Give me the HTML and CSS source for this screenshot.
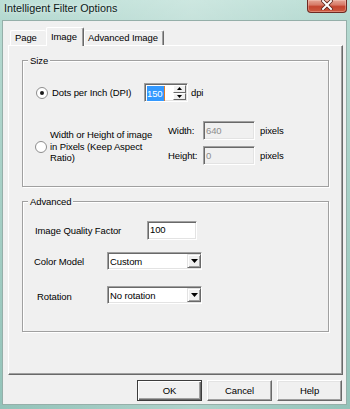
FILE: index.html
```html
<!DOCTYPE html>
<html>
<head>
<meta charset="utf-8">
<link rel="stylesheet" href="styles.css">
</head>
<body>
<div class="window">
  <div class="titlebar">
    <span class="title">Intelligent Filter Options</span>
    <div class="close">
      <svg width="12" height="10" viewBox="0 0 12 10">
        <path d="M2 1L10 9M10 1L2 9" stroke="#5a231b" stroke-width="3.6" stroke-linecap="square"/>
        <path d="M2 1L10 9M10 1L2 9" stroke="#fff" stroke-width="2" stroke-linecap="square"/>
      </svg>
    </div>
  </div>
  <div class="client">
    <div class="tabs">
      <div class="tab tab-page">Page</div>
      <div class="tab tab-active">Image</div>
      <div class="tab tab-adv">Advanced Image</div>
    </div>
    <div class="panel">
      <div class="group group-size">
        <div class="legend">Size</div>
        <div class="row-dpi">
          <svg class="radio" width="12" height="12" viewBox="0 0 12 12">
            <circle cx="6" cy="6" r="5.5" fill="#fff" stroke="#8c8c8c"/>
            <circle cx="6" cy="6" r="2" fill="#1a1a1a"/>
          </svg>
          <span class="dpi-label">Dots per Inch (DPI)</span>
          <div class="spin">
            <div class="spin-field"><span class="sel">150</span></div>
            <div class="spin-btns">
              <div class="spin-btn"><svg width="5" height="3" viewBox="0 0 5 3"><path d="M2.5 0L5 3H0z" fill="#000"/></svg></div>
              <div class="spin-btn"><svg width="5" height="3" viewBox="0 0 5 3"><path d="M0 0H5L2.5 3z" fill="#000"/></svg></div>
            </div>
          </div>
          <span class="unit-dpi">dpi</span>
        </div>
        <div class="row-px">
          <svg class="radio radio-px" width="12" height="12" viewBox="0 0 12 12">
            <circle cx="6" cy="6" r="5.5" fill="#fff" stroke="#8c8c8c"/>
          </svg>
          <div class="px-label">Width or Height of image<br>in Pixels (Keep Aspect<br>Ratio)</div>
          <div class="px-grid">
            <span class="px-name">Width:</span>
            <div class="field disabled">640</div>
            <span class="px-unit">pixels</span>
            <span class="px-name">Height:</span>
            <div class="field disabled">0</div>
            <span class="px-unit">pixels</span>
          </div>
        </div>
      </div>
      <div class="group group-adv">
        <div class="legend">Advanced</div>
        <div class="adv-row adv-row1">
          <span class="adv-label lbl-iqf">Image Quality Factor</span>
          <div class="field iqf">100</div>
        </div>
        <div class="adv-row adv-row2">
          <span class="adv-label lbl-color">Color Model</span>
          <div class="combo">
            <span class="combo-text">Custom</span>
            <div class="combo-btn"><svg width="7" height="4" viewBox="0 0 7 4"><path d="M0 0H7L3.5 4z" fill="#000"/></svg></div>
          </div>
        </div>
        <div class="adv-row adv-row3">
          <span class="adv-label lbl-rot">Rotation</span>
          <div class="combo">
            <span class="combo-text">No rotation</span>
            <div class="combo-btn"><svg width="7" height="4" viewBox="0 0 7 4"><path d="M0 0H7L3.5 4z" fill="#000"/></svg></div>
          </div>
        </div>
      </div>
    </div>
    <div class="buttons">
      <div class="btn btn-default">OK</div>
      <div class="btn">Cancel</div>
      <div class="btn">Help</div>
    </div>
  </div>
</div>
</body>
</html>
```

FILE: styles.css
```css
* { box-sizing: border-box; }

body {
  margin: 0;
  font-family: "Liberation Sans", Arial, sans-serif;
  font-size: 9.5px;
  letter-spacing: -0.1px;
  color: #000;
  background: #9cc8be;
}

.window {
  width: 350px;
  height: 409px;
  padding: 0 3px 4px 2px;
  display: flex;
  flex-direction: column;
  background:
    linear-gradient(90deg, rgba(255,255,255,0) 0, rgba(255,255,255,0.25) 55%, rgba(255,255,255,0) 100%),
    linear-gradient(180deg, #bcdfd6 0, #b4d9d0 20px, #a2cdc3 60%, #93c3b9 100%);
}

.titlebar {
  height: 20px;
  display: flex;
  justify-content: space-between;
  align-items: flex-start;
}

.title {
  font-size: 10.8px;
  letter-spacing: 0;
  line-height: 16px;
  padding-left: 2px;
  color: #0c1a18;
  text-shadow: 0 0 5px rgba(255,255,255,0.9);
}

.close {
  width: 40px;
  height: 13px;
  border: 1px solid #6e2a22;
  border-top: none;
  border-radius: 0 0 4px 4px;
  background: linear-gradient(180deg, #e5a595 0, #d77b68 40%, #c4452f 55%, #cc5a40 100%);
  box-shadow: inset 0 0 0 1px rgba(255,220,210,0.35);
  display: flex;
  justify-content: center;
  align-items: flex-start;
  padding-top: 0;
}

.client {
  flex: 1;
  background: #f0f0f0;
  border: 1px solid #95afa9;
  padding: 6px 3px 0 5px;
  display: flex;
  flex-direction: column;
}

/* Tabs */
.tabs {
  display: flex;
  align-items: flex-end;
  height: 18px;
  padding-left: 2px;
}

.tab {
  height: 15px;
  line-height: 14px;
  border: 1px solid;
  border-color: #fff #696969 transparent #fff;
  border-bottom: none;
  box-shadow: inset -1px 0 0 #a0a0a0;
  border-radius: 2px 2px 0 0;
  padding-left: 4px;
  background: #f0f0f0;
  white-space: nowrap;
}

.tab-page {
  width: 36px;
  border-right: none;
  box-shadow: none;
}

.tab-active {
  width: 38px;
  height: 19px;
  line-height: 17px;
  margin-bottom: -1px;
  position: relative;
  z-index: 2;
}

.tab-adv {
  width: 80px;
  padding-left: 3px;
}

/* Panel */
.panel {
  height: 330px;
  border: 1px solid;
  border-color: #fff #696969 #696969 #fff;
  box-shadow: inset -1px -1px 0 #a0a0a0;
  padding: 14px 0 0 13px;
}

.group {
  width: 307px;
  border: 1px solid #a0a0a0;
  box-shadow: inset 1px 1px 0 #fff, 1px 1px 0 #fff;
}

.group-size { height: 127px; }
.group-adv { height: 131px; margin-top: 14px; }

.legend {
  width: max-content;
  margin: -6px 0 0 5px;
  padding: 0 2px;
  background: #f0f0f0;
  line-height: 11px;
}

.radio { display: block; flex: none; }

.row-dpi {
  display: flex;
  align-items: center;
  height: 19px;
  margin-top: 17px;
  padding-left: 13px;
}

.dpi-label {
  width: 92px;
  margin-left: 4px;
  white-space: nowrap;
}

.spin {
  display: flex;
  width: 44px;
  height: 19px;
  border: 1px solid;
  border-color: #a0a0a0 #fff #fff #a0a0a0;
  box-shadow: inset 1px 1px 0 #696969, inset -1px -1px 0 #e3e3e3;
  background: #fff;
  padding: 1px 1px 1px 2px;
}

.spin-field {
  flex: 1;
  padding-top: 1px;
}

.sel {
  display: inline-block;
  background: #3399ff;
  color: #fff;
  line-height: 15px;
  padding: 0 1px 0 0;
  border-right: 1px solid #e07a2a;
}

.spin-btns {
  width: 13px;
  display: flex;
  flex-direction: column;
}

.spin-btn {
  flex: 1;
  border: 1px solid;
  border-color: #fff #696969 #696969 #fff;
  background: #f0f0f0;
  display: flex;
  align-items: center;
  justify-content: center;
}

.unit-dpi { margin-left: 3px; }

.row-px {
  display: flex;
  align-items: flex-start;
  margin-top: 19px;
  padding-left: 12px;
}

.radio-px { margin-top: 20px; }

.px-label {
  width: 115px;
  margin-left: 3px;
  margin-top: 8px;
  line-height: 11.5px;
  white-space: nowrap;
}

.px-grid {
  margin-left: 3px;
  display: grid;
  grid-template-columns: 35px 52px auto;
  grid-auto-rows: 19px;
  row-gap: 6px;
  align-items: center;
}

.px-unit { margin-left: 5px; }

.field {
  height: 19px;
  border: 1px solid;
  border-color: #a0a0a0 #fff #fff #a0a0a0;
  box-shadow: inset 1px 1px 0 #696969, inset -1px -1px 0 #e3e3e3;
  line-height: 15px;
  padding: 1px 0 0 2px;
  background: #fff;
}

.field.disabled {
  width: 52px;
  background: #f0f0f0;
  color: #8d8d8d;
}

.field.iqf {
  width: 50px;
  padding-left: 2px;
  line-height: 13px;
}

/* Advanced rows */
.adv-row {
  display: flex;
  align-items: center;
}

.adv-row1 { height: 19px; margin-top: 14px; }
.adv-row2 { height: 18px; margin-top: 12px; }
.adv-row3 { height: 18px; margin-top: 16px; }

.adv-label { white-space: nowrap; }
.lbl-iqf { width: 124px; padding-left: 12px; }
.lbl-color { width: 84px; padding-left: 11px; }
.lbl-rot { width: 84px; padding-left: 14px; margin-top: 3px; }

.combo {
  display: flex;
  align-items: center;
  width: 95px;
  height: 18px;
  border: 1px solid;
  border-color: #a0a0a0 #fff #fff #a0a0a0;
  box-shadow: inset 1px 1px 0 #696969, inset -1px -1px 0 #e3e3e3;
  background: #fff;
  padding: 1px 0 1px 2px;
}

.combo-text {
  flex: 1;
  white-space: nowrap;
}

.combo-btn {
  width: 14px;
  height: 14px;
  border: 1px solid;
  border-color: #e3e3e3 #696969 #696969 #e3e3e3;
  box-shadow: inset 1px 1px 0 #fff, inset -1px -1px 0 #a0a0a0;
  background: #f0f0f0;
  display: flex;
  align-items: center;
  justify-content: center;
}

/* Buttons */
.buttons {
  display: flex;
  justify-content: flex-end;
  gap: 5px;
  margin-top: 5px;
  padding-right: 1px;
}

.btn {
  width: 65px;
  height: 21px;
  border: 1px solid;
  border-color: #fff #696969 #696969 #fff;
  box-shadow: inset -1px -1px 0 #a0a0a0, inset 1px 1px 0 #e3e3e3;
  background: #f0f0f0;
  text-align: center;
  line-height: 19px;
}

.btn-default {
  border-color: #3c3c3c;
  box-shadow: inset 1px 1px 0 #fff, inset -1px -1px 0 #696969, inset -2px -2px 0 #a0a0a0;
}
```
